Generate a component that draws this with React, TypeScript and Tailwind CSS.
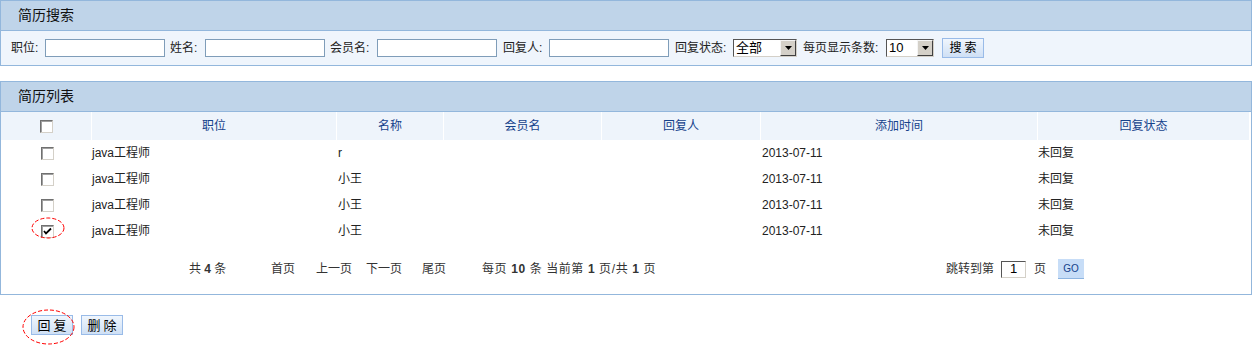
import React from "react";

const rows = [
  { job: "java工程师", name: "r", member: "", replier: "", date: "2013-07-11", status: "未回复", checked: false },
  { job: "java工程师", name: "小王", member: "", replier: "", date: "2013-07-11", status: "未回复", checked: false },
  { job: "java工程师", name: "小王", member: "", replier: "", date: "2013-07-11", status: "未回复", checked: false },
  { job: "java工程师", name: "小王", member: "", replier: "", date: "2013-07-11", status: "未回复", checked: true },
];

const cols = [
  { label: "", w: "w-[90px]" },
  { label: "职位", w: "w-[245px]" },
  { label: "名称", w: "w-[107px]" },
  { label: "会员名", w: "w-[158px]" },
  { label: "回复人", w: "w-[159px]" },
  { label: "添加时间", w: "w-[277px]" },
  { label: "回复状态", w: "w-[212px]" },
];

function Checkbox({ checked = false }: { checked?: boolean }) {
  return (
    <span className="relative inline-block w-[13px] h-[13px] bg-white border border-t-[#707070] border-l-[#707070] border-b-[#d4d0c8] border-r-[#d4d0c8] shadow-[inset_1px_1px_0_#a0a0a0]">
      {checked && (
        <svg viewBox="0 0 11 11" className="absolute left-0 top-0 w-[11px] h-[11px]">
          <path d="M2 5 L4 7.5 L9 2.5" stroke="#000" strokeWidth="1.8" fill="none" />
        </svg>
      )}
    </span>
  );
}

function Select({ value, w }: { value: string; w: string }) {
  return (
    <div className={`${w} h-[18px] flex bg-white border border-t-[#555] border-l-[#555] border-b-[#d4d0c8] border-r-[#d4d0c8]`}>
      <div className="flex-1 pl-[2px] leading-[16px] text-black text-[13px]">{value}</div>
      <div className="w-[16px] h-[16px] bg-[#d4d0c8] border border-t-[#f4f4f4] border-l-[#f4f4f4] border-b-[#404040] border-r-[#404040] flex items-center justify-center">
        <svg viewBox="0 0 7 4" className="w-[7px] h-[4px]">
          <path d="M0 0 H7 L3.5 4 Z" fill="#000" />
        </svg>
      </div>
    </div>
  );
}

function TextInput() {
  return <div className="w-[120px] h-[18px] bg-white border border-[#7f9db9]" />;
}

function PanelHeader({ title }: { title: string }) {
  return (
    <div className="h-[30px] bg-[#bfd4e9] border-b border-[#93b7dc] pl-[17px] flex items-center text-[14px] text-[#111]">
      {title}
    </div>
  );
}

export default function App() {
  return (
    <div className="relative w-[1256px] h-[345px] bg-white text-[12px] text-[#222] font-['Liberation_Sans','Noto_Sans_CJK_SC',sans-serif] overflow-hidden">
      {/* 简历搜索 */}
      <div className="w-[1252px] border border-[#93b7dc]">
        <PanelHeader title="简历搜索" />
        <div className="h-[34px] bg-[#eff5fc] flex items-center pl-[10px]">
          <span className="w-[34px]">职位:</span>
          <TextInput />
          <span className="ml-[5px] w-[35px]">姓名:</span>
          <TextInput />
          <span className="ml-[5px] w-[47px]">会员名:</span>
          <TextInput />
          <span className="ml-[6px] w-[46px]">回复人:</span>
          <TextInput />
          <span className="ml-[6px] w-[58px]">回复状态:</span>
          <Select value="全部" w="w-[64px]" />
          <span className="ml-[6px] w-[83px]">每页显示条数:</span>
          <Select value="10" w="w-[48px]" />
          <button className="ml-[8px] w-[42px] h-[20px] border border-[#99bbe8] bg-gradient-to-b from-[#f0f6fd] to-[#cfe0f5] text-[12px] text-black tracking-[3px] pl-[3px]">
            搜索
          </button>
        </div>
      </div>

      {/* 简历列表 */}
      <div className="mt-[15px] w-[1252px] border border-[#93b7dc]">
        <PanelHeader title="简历列表" />
        <div className="w-[1248px]">
          <div className="flex h-[28px] bg-[#eef4fb] text-[#15428b]">
            {cols.map((c, i) => (
              <div key={i} className={`${c.w} flex items-center justify-center ${i > 0 ? "border-l border-white" : ""}`}>
                {i === 0 ? <Checkbox /> : c.label}
              </div>
            ))}
          </div>
          {rows.map((r, i) => (
            <div key={i} className="flex h-[26px] items-center">
              <div className="w-[90px] flex justify-center pl-[2px]">
                <Checkbox checked={r.checked} />
              </div>
              <div className="w-[245px] pl-[1px]">{r.job}</div>
              <div className="w-[107px] pl-[2px]">{r.name}</div>
              <div className="w-[158px]">{r.member}</div>
              <div className="w-[159px]">{r.replier}</div>
              <div className="w-[277px] pl-[2px]">{r.date}</div>
              <div className="w-[212px] pl-[1px]">{r.status}</div>
            </div>
          ))}
          <div className="h-[50px] flex items-center pl-[188px] text-[#333]">
            <span className="w-[82px]">共 <b>4</b> 条</span>
            <span className="w-[45px]">首页</span>
            <span className="w-[50px]">上一页</span>
            <span className="w-[56px]">下一页</span>
            <span className="w-[60px]">尾页</span>
            <span className="w-[464px] tracking-[0.6px]">
              每页 <b>10</b> 条 当前第 <b>1</b> 页/共 <b>1</b> 页
            </span>
            <span className="w-[55px]">跳转到第</span>
            <div className="w-[25px] h-[17px] bg-white border border-t-[#555] border-l-[#555] border-b-[#d4d0c8] border-r-[#d4d0c8] flex items-center justify-center text-black text-[13px]">
              1
            </div>
            <span className="ml-[8px] w-[24px]">页</span>
            <div className="w-[26px] h-[20px] bg-[#c7ddf7] border-b border-[#8db4e0] flex items-center justify-center text-[10px] text-[#15428b]">
              GO
            </div>
          </div>
        </div>
      </div>

      {/* 操作按钮 */}
      <div className="mt-[20px] pl-[31px] flex gap-[8px]">
        <button className="w-[42px] h-[20px] border border-[#99bbe8] bg-gradient-to-b from-[#f0f6fd] to-[#cfe0f5] text-[13px] text-black tracking-[3px] pl-[3px]">
          回复
        </button>
        <button className="w-[42px] h-[20px] border border-[#99bbe8] bg-gradient-to-b from-[#f0f6fd] to-[#cfe0f5] text-[13px] text-black tracking-[3px] pl-[3px]">
          删除
        </button>
      </div>

      {/* 红色标注 */}
      <svg className="absolute left-0 top-0 pointer-events-none" width="1256" height="345">
        <ellipse cx="48" cy="228" rx="16" ry="10" fill="none" stroke="#ff0000" strokeWidth="1" strokeDasharray="4 2" />
        <ellipse cx="48.5" cy="327" rx="25.5" ry="17" fill="none" stroke="#ff0000" strokeWidth="1" strokeDasharray="4 2" />
      </svg>
    </div>
  );
}
